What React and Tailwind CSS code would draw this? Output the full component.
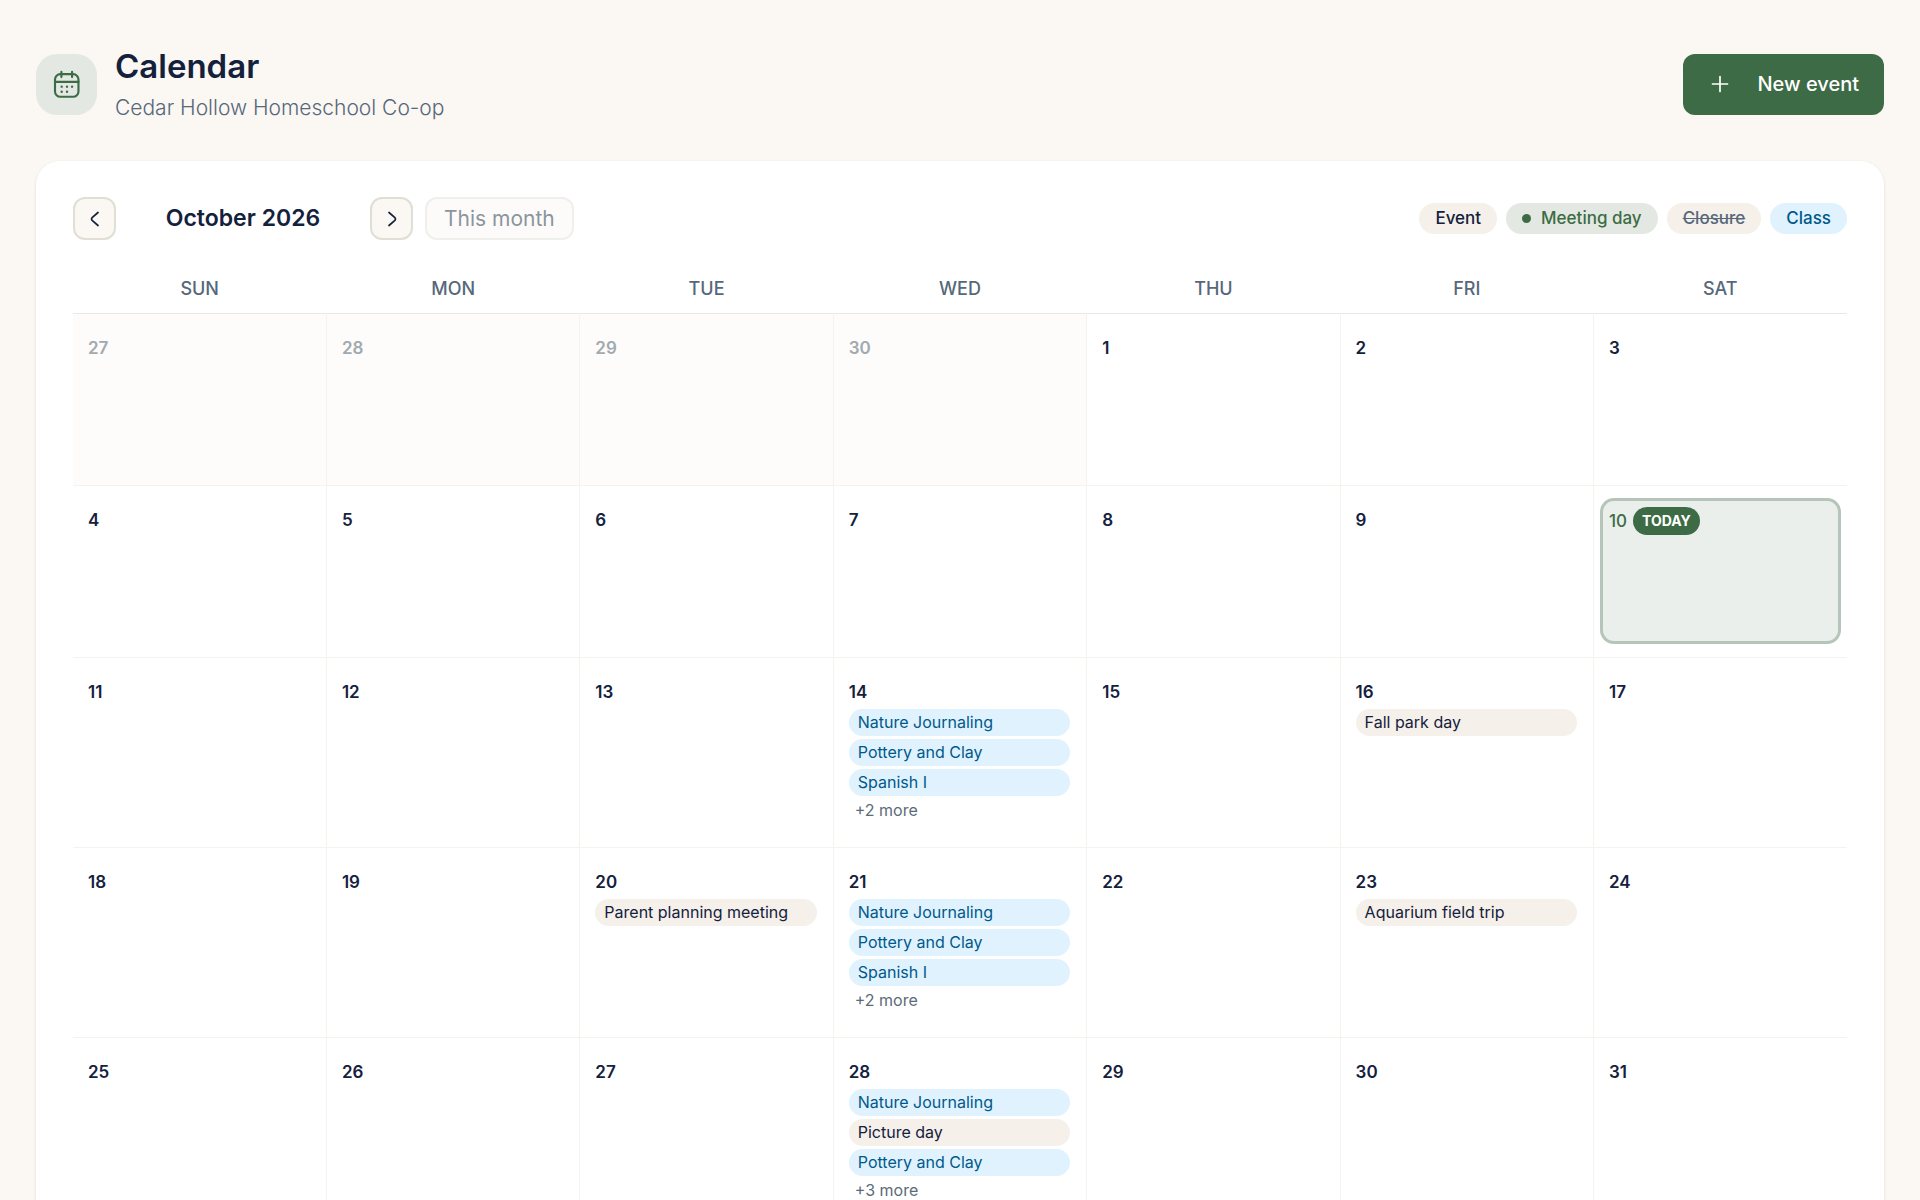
import React from "react";

const EVENT = "bg-[#f5f0ea] text-[#14213d]";
const CLASS = "bg-[#dff2fe] text-[#00598a]";

const c = (title) => ({ title, style: CLASS });
const e = (title) => ({ title, style: EVENT });

const weeks = [
  {
    tall: false,
    days: [
      { n: 27, muted: true }, { n: 28, muted: true }, { n: 29, muted: true }, { n: 30, muted: true },
      { n: 1 }, { n: 2 }, { n: 3 },
    ],
  },
  {
    tall: false,
    days: [{ n: 4 }, { n: 5 }, { n: 6 }, { n: 7 }, { n: 8 }, { n: 9 }, { n: 10, today: true }],
  },
  {
    tall: true,
    days: [
      { n: 11 }, { n: 12 }, { n: 13 },
      { n: 14, items: [c("Nature Journaling"), c("Pottery and Clay"), c("Spanish I")], more: 2 },
      { n: 15 },
      { n: 16, items: [e("Fall park day")] },
      { n: 17 },
    ],
  },
  {
    tall: true,
    days: [
      { n: 18 }, { n: 19 },
      { n: 20, items: [e("Parent planning meeting")] },
      { n: 21, items: [c("Nature Journaling"), c("Pottery and Clay"), c("Spanish I")], more: 2 },
      { n: 22 },
      { n: 23, items: [e("Aquarium field trip")] },
      { n: 24 },
    ],
  },
  {
    tall: true,
    days: [
      { n: 25 }, { n: 26 }, { n: 27 },
      { n: 28, items: [c("Nature Journaling"), e("Picture day"), c("Pottery and Clay")], more: 3 },
      { n: 29 }, { n: 30 }, { n: 31 },
    ],
  },
];

const weekdays = ["SUN", "MON", "TUE", "WED", "THU", "FRI", "SAT"];

function CalendarIcon() {
  return (
    <svg viewBox="0 0 24 24" className="size-8 text-[#3d6b45]" fill="none" stroke="currentColor" strokeWidth="1.6" strokeLinecap="round" aria-hidden="true">
      <rect x="3" y="4.6" width="17.6" height="17" rx="4" />
      <path d="M3 10.4h17.6M7.8 2.8v4M15.8 2.8v4" />
      <path d="M8 14h.01M12 14h.01M15.8 14h.01M8 17.8h.01M12 17.8h.01" strokeWidth="1.8" />
    </svg>
  );
}

function Stroke({ d, className }) {
  return (
    <svg viewBox="0 0 24 24" className={className} fill="none" stroke="currentColor" strokeWidth="1.7" strokeLinecap="round" strokeLinejoin="round" aria-hidden="true">
      <path d={d} />
    </svg>
  );
}

function Day({ day, tall }) {
  if (day.today) {
    return (
      <div className="px-1.5 py-3">
        <div className="h-[146px] rounded-[14px] border-3 border-[#b5c5b9] bg-[#eaefeb] px-1.5 pt-1.5">
          <div className="flex items-center gap-1.5">
            <span className="text-[17px] leading-7 font-medium text-[#3d6b45]">{day.n}</span>
            <span className="rounded-full bg-[#3d6b45] px-[9px] text-[14px] leading-7 font-bold text-white">TODAY</span>
          </div>
        </div>
      </div>
    );
  }
  return (
    <div className={(tall ? "h-[189px]" : "h-[171px]") + " pt-5 pr-4 pl-[15px]"}>
      <div className={"text-[17px] leading-7 font-semibold " + (day.muted ? "text-[#a0aab0]" : "text-[#14213d]")}>{day.n}</div>
      {day.items && (
        <ul className="mt-[3px] flex flex-col gap-[3px]">
          {day.items.map((it) => (
            <li key={it.title}>
              <a href="#" className={"block truncate rounded-full px-[9px] text-[16px] leading-[27px] " + it.style}>{it.title}</a>
            </li>
          ))}
        </ul>
      )}
      {day.more && (
        <button className="block px-1.5 text-[16px] leading-7 text-[#5b6b78]">+{day.more} more</button>
      )}
    </div>
  );
}

export default function App() {
  return (
    <div className="h-screen overflow-hidden bg-[#fbf7f2] px-9 font-[Inter,sans-serif] text-[#14213d]">
      <header className="flex items-center justify-between pt-[42px] pb-[35px]">
        <div className="flex items-center gap-[18px]">
          <div className="flex size-[61px] items-center justify-center rounded-[21px] bg-[#e3e9e2]">
            <CalendarIcon />
          </div>
          <div>
            <h1 className="text-[33px] leading-[48px] font-semibold">Calendar</h1>
            <p className="text-[21px] leading-9 font-light text-[#56687a]">Cedar Hollow Homeschool Co-op</p>
          </div>
        </div>
        <button className="flex h-[61px] items-center gap-[25px] rounded-xl bg-[#3d6b45] px-[25px] text-[20px] font-medium text-white">
          <Stroke d="M12 4.5v15M4.5 12h15" className="size-6" />
          New event
        </button>
      </header>

      <main className="rounded-t-3xl bg-white px-[37px] py-9 shadow-[0_1px_3px_rgba(20,33,61,0.12)]">
        <div className="flex items-center justify-between">
          <div className="flex items-center gap-3">
            <button aria-label="Previous month" className="flex size-[43px] items-center justify-center rounded-xl border-2 border-[#dfdfd6] bg-[#fbf7f2]">
              <Stroke d="M15 5.5 9.4 10.4q-1.7 1.6 0 3.2L15 18.5" className="size-6" />
            </button>
            <h2 className="w-[230px] text-center text-[23px] font-semibold">October 2026</h2>
            <button aria-label="Next month" className="flex size-[43px] items-center justify-center rounded-xl border-2 border-[#dfdfd6] bg-[#fbf7f2]">
              <Stroke d="M9 5.5l5.6 4.9q1.7 1.6 0 3.2L9 18.5" className="size-6" />
            </button>
            <button disabled className="h-[43px] rounded-xl border-2 border-[#efefeb] bg-[#fdfbf9] px-[17px] text-[21px] leading-9 text-[#8a959e]">
              This month
            </button>
          </div>
          <ul className="flex items-center gap-[9px] text-[17px] leading-[31px] font-medium">
            <li className={"rounded-full px-4 " + EVENT}>Event</li>
            <li className="flex items-center gap-2.5 rounded-full bg-[#e3e9e2] px-4 text-[#3d6b45]">
              <span className="size-[9px] rounded-full bg-[#3d6b45]" />
              Meeting day
            </li>
            <li className="rounded-full bg-[#f5f0ea] px-4 text-[#56687a] line-through">Closure</li>
            <li className={"rounded-full px-4 " + CLASS}>Class</li>
          </ul>
        </div>

        <table className="mt-[25px] w-full table-fixed border-collapse">
          <thead>
            <tr className="border-b border-[#e9e9e3]">
              {weekdays.map((d) => (
                <th key={d} scope="col" className="h-12 p-0 text-center text-[18px] font-medium text-[#56687a]">{d}</th>
              ))}
            </tr>
          </thead>
          <tbody>
            {weeks.map((w, i) => (
              <tr key={i} className="border-b border-[#f6f3ef]">
                {w.days.map((d) => (
                  <td key={d.n} className={"border-r border-[#f6f3ef] p-0 align-top last:border-r-0 " + (d.muted ? "bg-[#fdfcfa]" : "")}>
                    <Day day={d} tall={w.tall} />
                  </td>
                ))}
              </tr>
            ))}
          </tbody>
        </table>
      </main>
    </div>
  );
}
